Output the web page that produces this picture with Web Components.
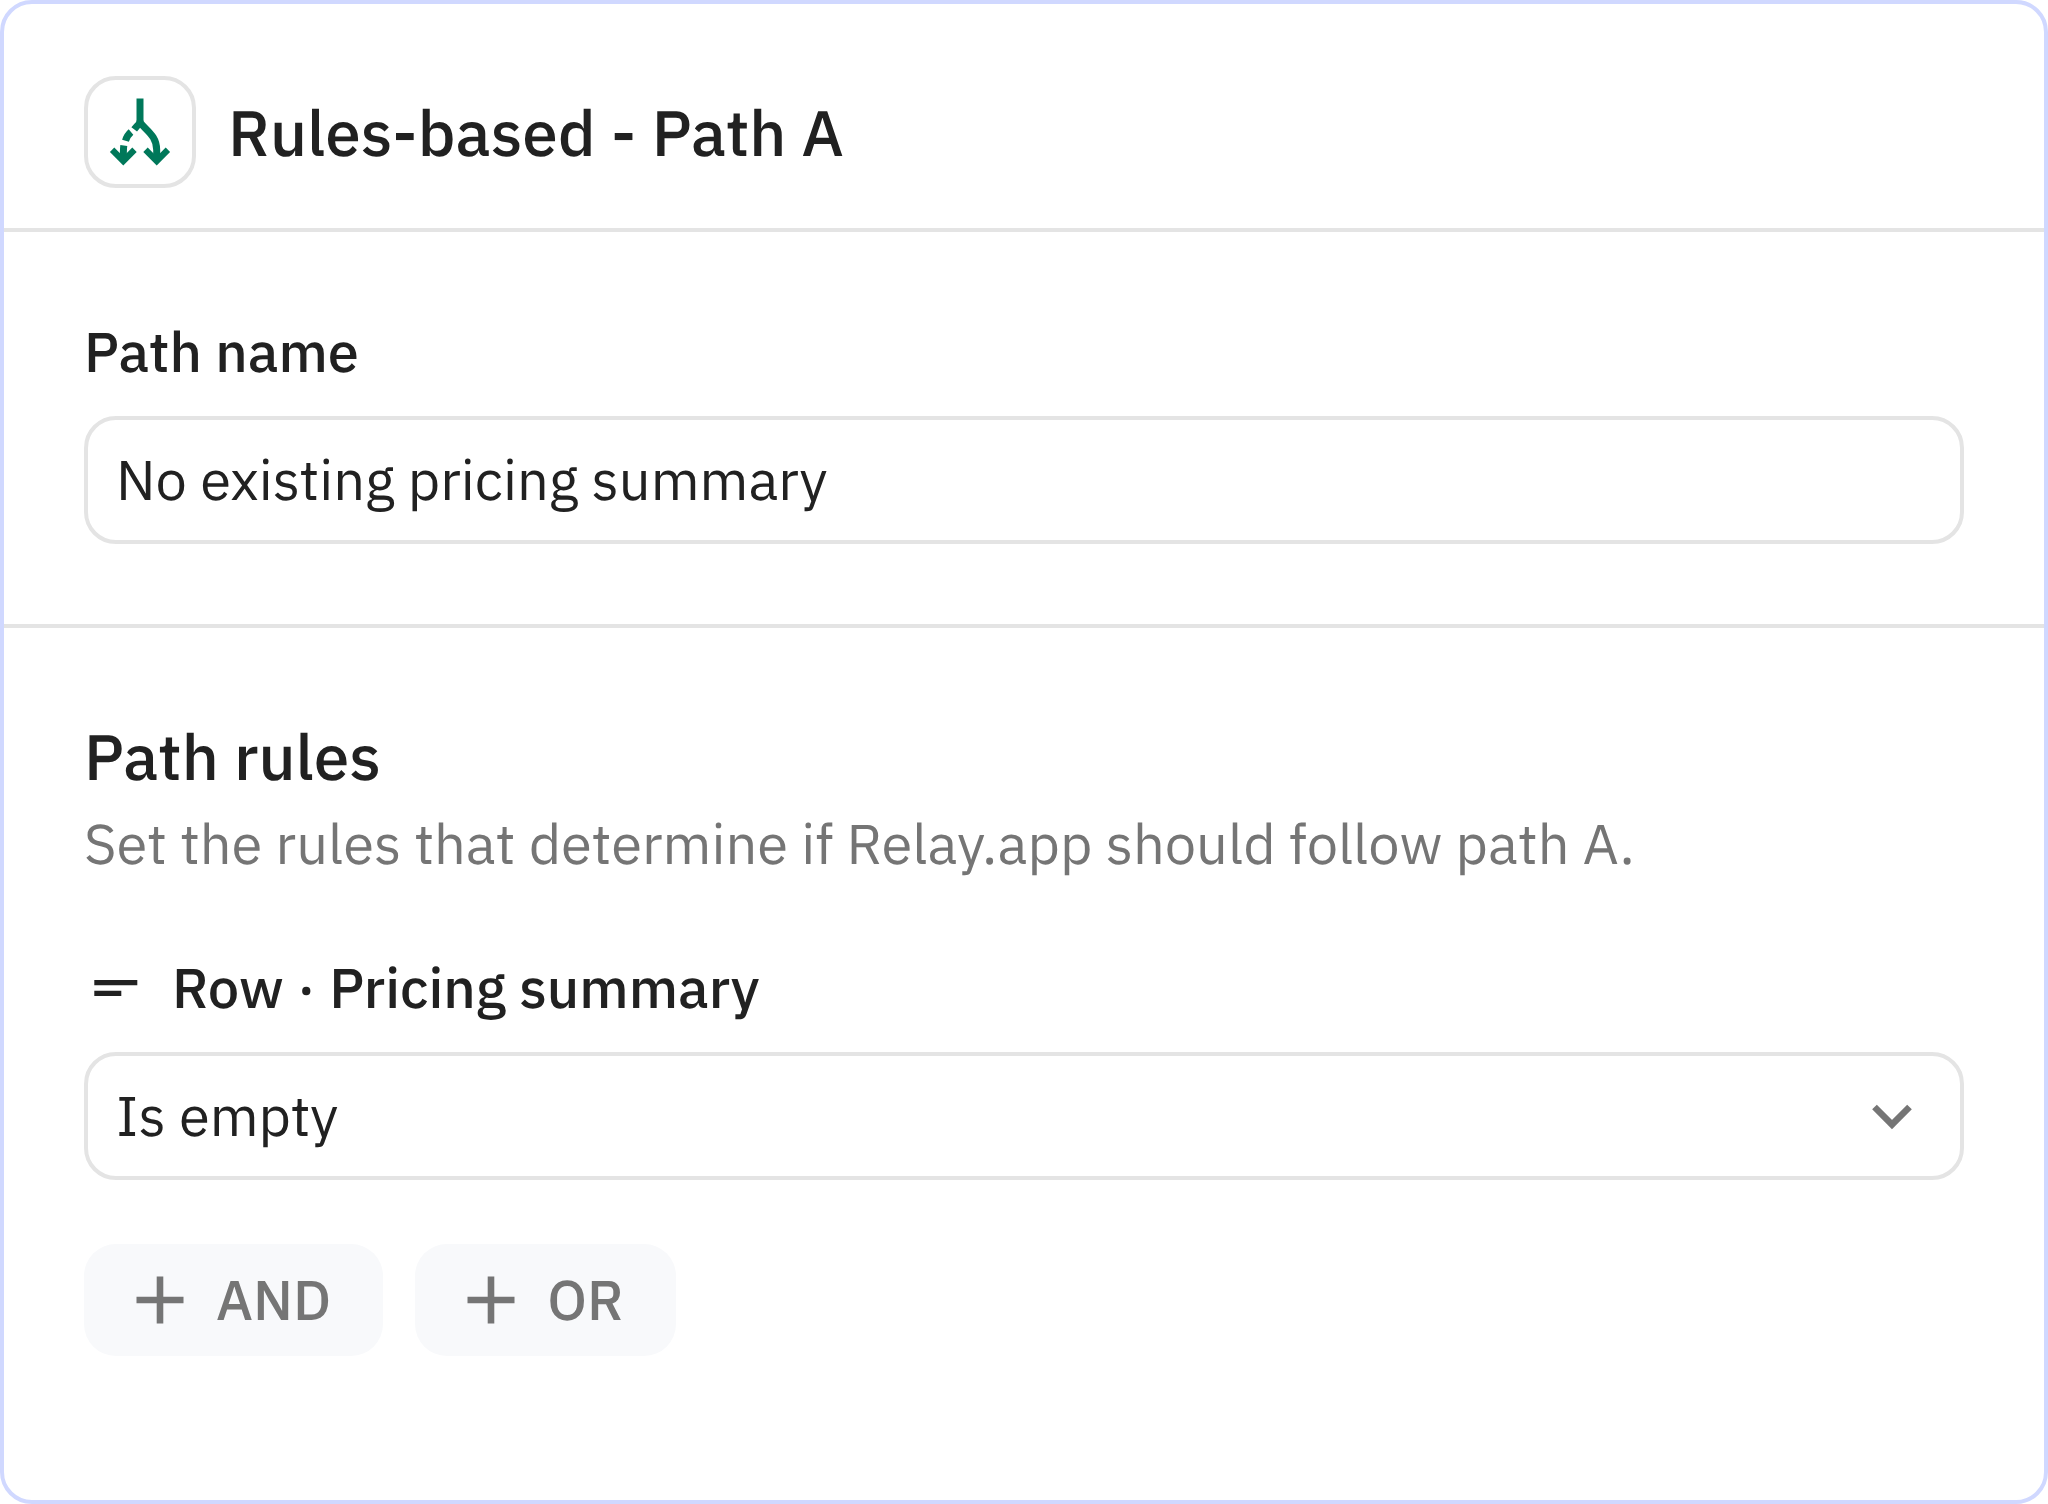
<!DOCTYPE html>
<html lang="en">
<head>
<meta charset="utf-8">
<title>Rules-based - Path A</title>
<style>
    html, body {
        height: 100%;
        margin: 0;
    }
    body {
        --text: #212121;
        --muted: #757575;
        --line: #e4e4e4;
        --frame: #d0d8ff;
        --soft: #f8f9fb;
        --green: #00785a;
        background: #fff;
        color: var(--text);
        font-family: "IBM Plex Sans", Roboto, "Liberation Sans", sans-serif;
        font-size: 56px;
        line-height: 80px;
        text-rendering: geometricPrecision;
    }
</style>
</head>
<body>

<path-panel>
    <panel-header>
        <path-icon slot="icon"></path-icon>
        Rules-based - Path A
    </panel-header>
    <panel-section>
        <text-field label="Path name" value="No existing pricing summary"></text-field>
    </panel-section>
    <panel-section>
        <section-title>
            Path rules
            <span slot="description">Set the rules that determine if Relay.app should follow path A.</span>
        </section-title>
        <rule-select label="Row · Pricing summary" options="Is empty|Is not empty"></rule-select>
        <rule-actions>
            <add-button>AND</add-button>
            <add-button>OR</add-button>
        </rule-actions>
    </panel-section>
</path-panel>

<script>
    // shared base: every element renders its template into an open root
    class BaseElement extends HTMLElement {
        constructor() {
            super();
            this.attachShadow({mode: 'open'});
        }

        connectedCallback() {
            this.shadowRoot.innerHTML = this.render();
        }
    }

    // outer frame
    customElements.define('path-panel', class extends BaseElement {
        render() {
            return `
            <style>
                :host {
                    display: flex;
                    flex-direction: column;
                    box-sizing: border-box;
                    min-height: 100%;
                    border: 4px solid var(--frame);
                    border-radius: 32px;
                }
                ::slotted(panel-section:last-child) {
                    border-bottom: 0;
                }
            </style>
            <slot></slot>`;
        }
    });

    customElements.define('panel-header', class extends BaseElement {
        render() {
            return `
            <style>
                :host {
                    display: flex;
                    align-items: center;
                    gap: 32px;
                    padding: 72px 80px 40px;
                    border-bottom: 4px solid var(--line);
                }
                h1 {
                    margin: 0;
                    font-size: 64px;
                    font-weight: 500;
                    line-height: 96px;
                }
            </style>
            <slot name="icon"></slot>
            <h1><slot></slot></h1>`;
        }
    });

    // forked path, left branch is dashed
    customElements.define('path-icon', class extends BaseElement {
        render() {
            return `
            <style>
                :host {
                    display: flex;
                    align-items: center;
                    justify-content: center;
                    box-sizing: border-box;
                    width: 112px;
                    height: 112px;
                    border: 4px solid var(--line);
                    border-radius: 32px;
                }
                svg {
                    fill: none;
                    stroke: var(--green);
                    stroke-width: 7;
                }
                .head {
                    stroke-width: 6.2;
                }
            </style>
            <svg width="72" height="72" viewBox="0 0 72 72" aria-hidden="true">
                <path d="M36 2.5V27"/>
                <path d="M36 24.500V26.500C43 35 52.700 40 52.700 54V63"/>
                <path class="head" d="M41.5 53.8L52.7 65L63.9 53.8"/>
                <path d="M37.5 26Q33 29.5 30.2 33.3"/>
                <path d="M27 36Q23 39.5 21.5 44.7"/>
                <path d="M19.8 49.5Q19.3 53 19.3 63"/>
                <path class="head" d="M8.1 53.8L19.3 65L30.5 53.8"/>
            </svg>`;
        }
    });

    customElements.define('panel-section', class extends BaseElement {
        render() {
            return `
            <style>
                :host {
                    display: flex;
                    flex-direction: column;
                    gap: 64px;
                    padding: 80px;
                    border-bottom: 4px solid var(--line);
                }
            </style>
            <slot></slot>`;
        }
    });

    customElements.define('section-title', class extends BaseElement {
        render() {
            return `
            <style>
                :host {
                    display: block;
                }
                h2, p {
                    margin: 0;
                }
                h2 {
                    font-size: 64px;
                    font-weight: 500;
                    line-height: 96px;
                }
                p {
                    color: var(--muted);
                }
            </style>
            <h2><slot></slot></h2>
            <p><slot name="description"></slot></p>`;
        }
    });

    // common look of the text box and the drop-down
    const fieldStyle = `
        :host {
            display: flex;
            flex-direction: column;
            gap: 24px;
        }
        label {
            display: flex;
            align-items: center;
            gap: 24px;
            font-weight: 500;
        }
        input, select {
            box-sizing: border-box;
            width: 100%;
            height: 128px;
            margin: 0;
            padding: 0 28px;
            border: 4px solid var(--line);
            border-radius: 32px;
            outline: 0;
            appearance: none;
            background: transparent;
            color: inherit;
            font: inherit;
            text-rendering: inherit;
        }`;

    customElements.define('text-field', class extends BaseElement {
        render() {
            return `
            <style>${fieldStyle}</style>
            <label for="field">${this.getAttribute('label')}</label>
            <input id="field" type="text" value="${this.getAttribute('value')}">`;
        }
    });

    customElements.define('rule-select', class extends BaseElement {
        render() {
            const options = this.getAttribute('options').split('|');
            return `
            <style>
                ${fieldStyle}
                .box {
                    display: grid;
                    align-items: center;
                }
                .box > * {
                    grid-area: 1 / 1;
                }
                .chevron {
                    justify-self: end;
                    margin-right: 40px;
                    pointer-events: none;
                }
                svg {
                    fill: none;
                    stroke: var(--muted);
                    stroke-width: 6.6;
                }
                label svg {
                    stroke: var(--text);
                    stroke-width: 5.3;
                }
            </style>
            <label for="field">
                <svg width="64" height="64" viewBox="0 0 64 64" aria-hidden="true"><path d="M10.3 26.6H53.3M10.3 37.4H37.3"/></svg>
                ${this.getAttribute('label')}
            </label>
            <div class="box">
                <select id="field">${options.map(o => `<option>${o}</option>`).join('')}</select>
                <svg class="chevron" width="64" height="64" viewBox="0 0 64 64" aria-hidden="true"><path d="M14.5 23L32 40.5L49.5 23"/></svg>
            </div>`;
        }
    });

    customElements.define('rule-actions', class extends BaseElement {
        render() {
            return `
            <style>
                :host {
                    display: flex;
                    gap: 32px;
                }
            </style>
            <slot></slot>`;
        }
    });

    customElements.define('add-button', class extends BaseElement {
        render() {
            return `
            <style>
                :host {
                    display: block;
                }
                button {
                    display: flex;
                    align-items: center;
                    gap: 32px;
                    height: 112px;
                    padding: 0 52px;
                    border: 0;
                    border-radius: 32px;
                    background: var(--soft);
                    color: var(--muted);
                    font: inherit;
                    font-weight: 500;
                    text-rendering: inherit;
                    cursor: pointer;
                }
                svg {
                    stroke: currentColor;
                    stroke-width: 6.6;
                }
            </style>
            <button type="button">
                <svg width="48" height="48" viewBox="0 0 48 48" aria-hidden="true"><path d="M24 .5V47.5M.5 24H47.5"/></svg>
                <slot></slot>
            </button>`;
        }
    });
</script>
</body>
</html>
